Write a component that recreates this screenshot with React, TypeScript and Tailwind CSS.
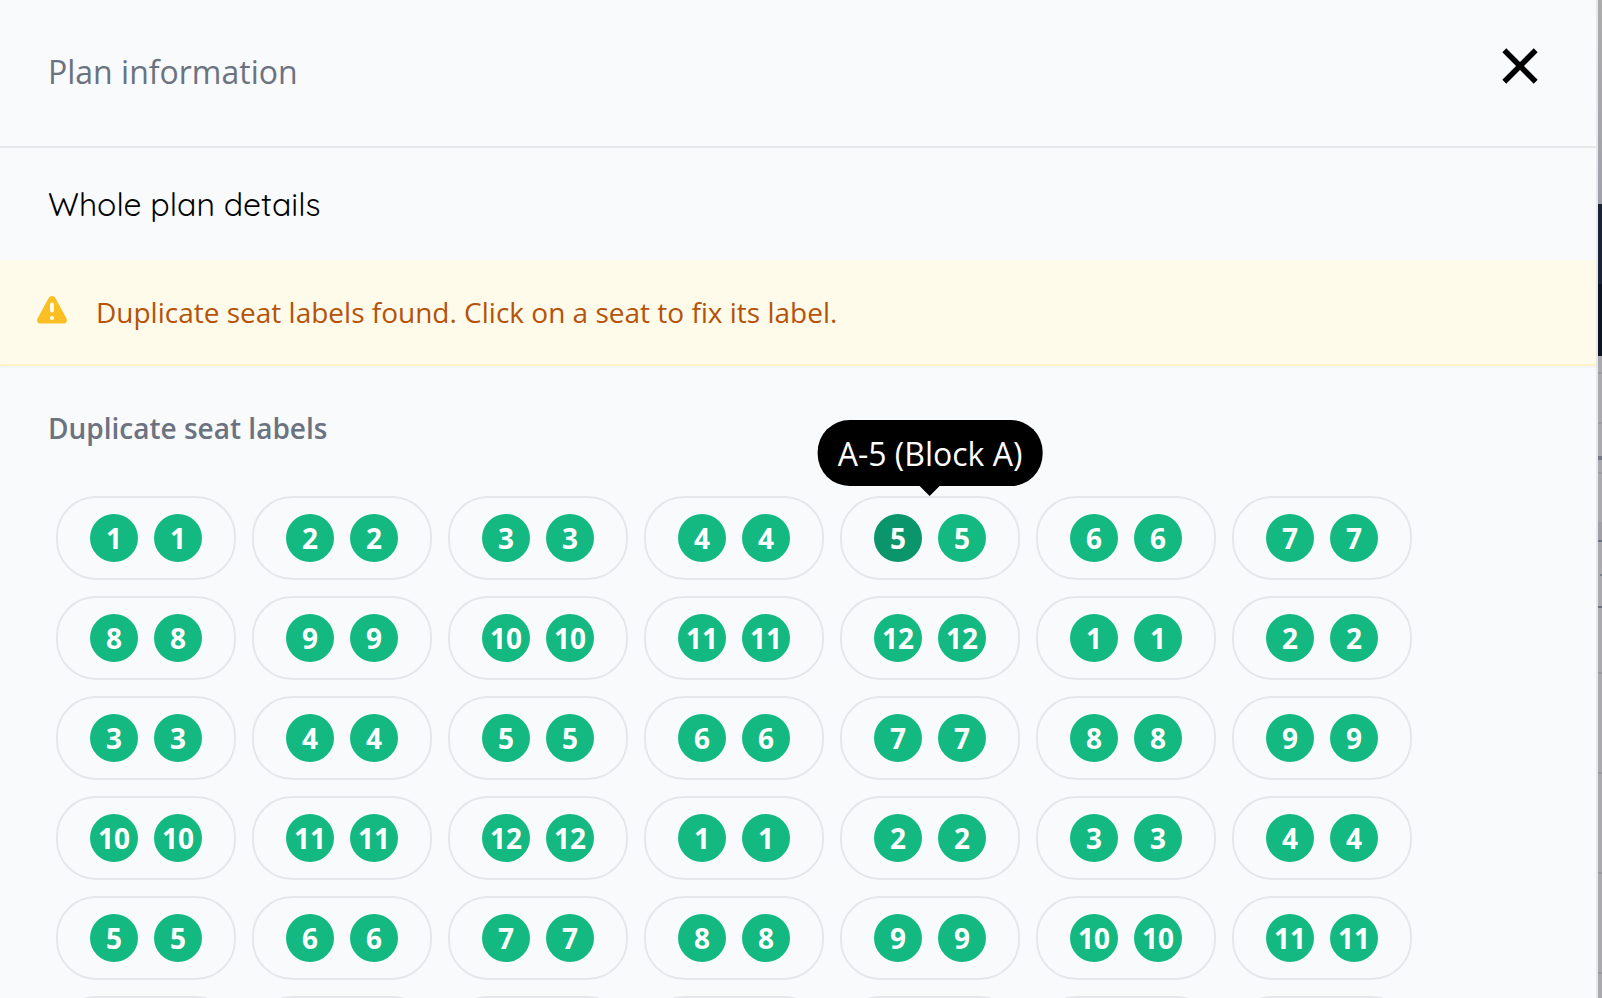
import clsx from 'clsx';

interface Seat {
  label: string;
  block?: string;
  active?: boolean;
}

const SEATS_PER_ROW = 12;
const DUPLICATES = 42;

// seat numbers restart with every row of the plan
const groups: Seat[][] = Array.from({ length: DUPLICATES }, (_, i) => {
  const label = String((i % SEATS_PER_ROW) + 1);
  return i === 4
    ? [{ label, block: 'A-5 (Block A)', active: true }, { label }]
    : [{ label }, { label }];
});

const Tooltip = ({ text }: { text: string }) => (
  <div
    role="tooltip"
    className="absolute bottom-full left-1/2 mb-3 -translate-x-1/2 rounded-[32px] bg-black px-5 pt-3 pb-2.5 text-[32px] leading-11 whitespace-nowrap text-white"
  >
    {text}
    <span className="absolute top-full left-1/2 -translate-x-1/2 border-x-10 border-t-10 border-x-transparent border-t-black" />
  </div>
);

const SeatGroup = ({ seats }: { seats: Seat[] }) => {
  const tooltip = seats.find((seat) => seat.active)?.block;

  return (
    <li className="relative flex gap-4 rounded-[40px] border-2 border-[#e5e7eb] px-8 py-4">
      {seats.map((seat, i) => (
        <button
          key={i}
          type="button"
          className={clsx(
            'flex size-12 items-center justify-center rounded-full text-[28px] leading-10 font-bold text-white',
            seat.active ? 'bg-[#0a956a]' : 'bg-[#14b981]',
          )}
        >
          {seat.label}
        </button>
      ))}
      {tooltip && <Tooltip text={tooltip} />}
    </li>
  );
};

const WarningIcon = () => (
  <svg viewBox="0 0 32 32" className="mb-1 size-8 shrink-0" aria-hidden="true">
    <path
      fill="#fbbf24"
      d="M12.5 4.2c1.5-2.9 5.5-2.9 7 0l11 20.3c1.3 2.5-.2 5.1-3 5.1h-23c-2.8 0-4.3-2.6-3-5.1z"
    />
    <path stroke="#fffbeb" strokeWidth="4" strokeLinecap="round" d="M16 10.5v6" />
    <circle cx="16" cy="24" r="2.1" fill="#fffbeb" />
  </svg>
);

// the sliver of the seating plan that stays visible behind the panel
const Backdrop = () => (
  <div className="flex w-1 shrink-0 flex-col bg-[#a9a9ae]" aria-hidden="true">
    <div className="h-51 bg-linear-to-b from-[#acacac] to-[#a0a0aa]" />
    <div className="h-20 bg-[#1a2335]" />
    <div className="h-18 bg-[#0d1522]" />
    <div className="mt-4 h-0.5 bg-[#9c9ca1]" />
    <div className="mt-12 h-0.5 bg-[#9c9ca1]" />
    <div className="mt-8 h-1 bg-[#737887]" />
    <div className="mt-3 h-0.5 bg-[#9c9ca1]" />
    <div className="mt-12 h-[18px] bg-[#9f9fa5]" />
    <div className="h-0.5 bg-[#6c7180]" />
    <div className="mt-8 ml-0.5 h-0.5 bg-[#7b7f8c]" />
    <div className="mt-[30px] h-0.5 bg-[#6c7180]" />
    <div className="mt-16 h-0.5 bg-[#98989e]" />
    <div className="mt-[98px] h-0.5 bg-[#98989e]" />
    <div className="mt-[98px] h-0.5 bg-[#98989e]" />
    <div className="mt-[98px] h-0.5 bg-[#98989e]" />
  </div>
);

const App = () => {
  return (
    <div className="flex h-screen overflow-hidden font-['Open_Sans','Noto_Sans',sans-serif]">
      <main className="min-w-0 flex-1 overflow-y-auto border-r-2 border-[#e5e7eb] bg-[#f9fafc] [scrollbar-width:none]">
        <header className="flex items-start justify-between border-b-2 border-[#e5e7eb] px-12 pt-12 pb-[50px]">
          <h1 className="text-[32px] leading-12 text-[#6b7280]">Plan information</h1>
          <button type="button" aria-label="Close" className="mr-2.5">
            <svg viewBox="0 0 36 36" className="size-9" aria-hidden="true">
              <path
                stroke="#000"
                strokeWidth="5.5"
                d="M2.3 2.3l31.4 31.4M33.7 2.3L2.3 33.7"
              />
            </svg>
          </button>
        </header>

        <h2 className="px-12 py-8 font-[Quicksand,Lato,sans-serif] text-[32px] leading-12 text-black">
          Whole plan details
        </h2>

        <div
          role="alert"
          className="flex items-center gap-7 border-b-2 border-[#fef3c7] bg-[#fffbeb] px-9 py-8 shadow-xs"
        >
          <WarningIcon />
          <p className="text-[28px] leading-10 text-[#b45309]">
            Duplicate seat labels found. Click on a seat to fix its label.
          </p>
        </div>

        <section className="px-12 pt-[42px]">
          <h3 className="text-[28px] leading-10 font-semibold text-[#6b7280]">
            Duplicate seat labels
          </h3>
          <ul className="mt-12 flex flex-wrap gap-4 px-2">
            {groups.map((seats, i) => (
              <SeatGroup key={i} seats={seats} />
            ))}
          </ul>
        </section>
      </main>
      <Backdrop />
    </div>
  );
};

export default App;
